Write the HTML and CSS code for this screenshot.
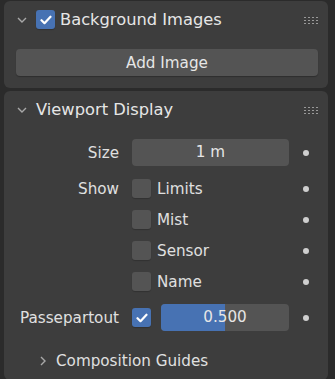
FILE: index.html
```html
<!DOCTYPE html>
<html lang="en">
<head>
  <meta charset="utf-8"/>
  <title>Camera Properties</title>
  <link rel="stylesheet" href="styles.css">
</head>
<body>
  <div class="editor">

    <!-- Background Images -->
    <section class="panel">
      <div class="panel-header">
        <svg class="chevron" viewBox="0 0 10 6" width="10" height="6">
          <path d="M1 1l4 4 4-4" fill="none" stroke="currentColor" stroke-width="1.4"/>
        </svg>
        <span class="check checked header-check">
          <svg viewBox="0 0 12 10" width="12" height="10"><path d="M1.5 5.2l3 3 6-6.5" fill="none" stroke="#fff" stroke-width="2.2" stroke-linecap="round" stroke-linejoin="round"/></svg>
        </span>
        <span class="panel-title">Background Images</span>
        <span class="grip"></span>
      </div>
      <div class="panel-body first-body">
        <button class="btn-wide">Add Image</button>
      </div>
    </section>

    <!-- Viewport Display -->
    <section class="panel panel-fill">
      <div class="panel-header">
        <svg class="chevron" viewBox="0 0 10 6" width="10" height="6">
          <path d="M1 1l4 4 4-4" fill="none" stroke="currentColor" stroke-width="1.4"/>
        </svg>
        <span class="panel-title">Viewport Display</span>
        <span class="grip"></span>
      </div>

      <div class="prop-row field-row">
        <span class="prop-label">Size</span>
        <div class="field">1 m</div>
        <span class="dot"></span>
      </div>

      <div class="prop-row check-row gap-top">
        <span class="prop-label">Show</span>
        <label class="check-item"><span class="check"></span>Limits</label>
        <span class="dot"></span>
      </div>
      <div class="prop-row check-row">
        <span class="prop-label"></span>
        <label class="check-item"><span class="check"></span>Mist</label>
        <span class="dot"></span>
      </div>
      <div class="prop-row check-row">
        <span class="prop-label"></span>
        <label class="check-item"><span class="check"></span>Sensor</label>
        <span class="dot"></span>
      </div>
      <div class="prop-row check-row">
        <span class="prop-label"></span>
        <label class="check-item"><span class="check"></span>Name</label>
        <span class="dot"></span>
      </div>

      <div class="prop-row field-row gap-top">
        <span class="prop-label">Passepartout</span>
        <div class="slider-group">
          <span class="check checked">
            <svg viewBox="0 0 12 10" width="12" height="10"><path d="M1.5 5.2l3 3 6-6.5" fill="none" stroke="#fff" stroke-width="2.2" stroke-linecap="round" stroke-linejoin="round"/></svg>
          </span>
          <div class="slider">
            <div class="slider-fill" style="width: 50%"></div>
            <span class="slider-value">0.500</span>
          </div>
        </div>
        <span class="dot"></span>
      </div>

      <div class="subpanel">
        <svg class="chevron-right" viewBox="0 0 6 10" width="6" height="10">
          <path d="M1 1l4 4-4 4" fill="none" stroke="currentColor" stroke-width="1.4"/>
        </svg>
        <span>Composition Guides</span>
      </div>
    </section>

  </div>
</body>
</html>
```

FILE: styles.css
```css
body {
  margin: 0;
  background-color: #2b2b2b;
  font-family: "DejaVu Sans", sans-serif;
  font-size: 15.2px;
  color: #e0e0e0;
  height: 379px;
  overflow: hidden;
}

.editor {
  padding: 1px 7px 0 4px;
  display: flex;
  flex-direction: column;
  gap: 3px;
}

.panel {
  background-color: #3d3d3d;
  border-radius: 6px;
}

.panel-fill {
  padding-bottom: 4px;
}

.panel-header {
  height: 37px;
  display: flex;
  align-items: center;
  padding-left: 13px;
  padding-right: 9px;
}

.chevron {
  color: #a8a8a8;
  margin-right: 9px;
}

.header-check {
  margin-right: 5px;
}

.panel-title {
  flex: 1;
  font-size: 16.3px;
  color: #e6e6e6;
}

.grip {
  width: 14px;
  height: 8px;
  background-image: radial-gradient(circle, #9a9a9a 0.9px, transparent 1.1px);
  background-size: 4px 3px;
  background-position: -1px 0;
  margin-right: 1px;
}

.first-body {
  padding: 11px 10px 12px 12px;
}

.btn-wide {
  width: 100%;
  height: 27px;
  background-color: #545454;
  border: none;
  border-radius: 4px;
  color: #e6e6e6;
  font-family: inherit;
  font-size: 15.2px;
  box-shadow: 0 1px 1px rgba(0, 0, 0, 0.25);
}

.prop-row {
  display: grid;
  grid-template-columns: 115px 157px 1fr;
  column-gap: 13px;
  align-items: center;
}

.field-row {
  height: 27px;
  margin-top: 11px;
}

.check-row {
  height: 31px;
}

.gap-top {
  margin-top: 7px;
}

.prop-label {
  text-align: right;
  color: #e0e0e0;
}

.field {
  height: 27px;
  line-height: 27px;
  background-color: #545454;
  border-radius: 4px;
  text-align: center;
  color: #e6e6e6;
}

.dot {
  width: 6px;
  height: 6px;
  border-radius: 50%;
  background-color: #cfcfcf;
  margin-left: 1px;
}

.check {
  width: 19px;
  height: 19px;
  border-radius: 3px;
  background-color: #545454;
  display: inline-flex;
  align-items: center;
  justify-content: center;
  flex-shrink: 0;
  box-shadow: 0 1px 1px rgba(0, 0, 0, 0.2);
}

.check.checked {
  background-color: #4772b3;
}

.check-item {
  display: flex;
  align-items: center;
  gap: 6px;
}

.slider-group {
  display: flex;
  align-items: center;
  gap: 10px;
}

.slider {
  position: relative;
  flex: 1;
  height: 27px;
  background-color: #545454;
  border-radius: 4px;
  overflow: hidden;
}

.slider-fill {
  height: 100%;
  background-color: #4772b3;
}

.slider-value {
  position: absolute;
  inset: 0;
  line-height: 27px;
  text-align: center;
  color: #e6e6e6;
}

.subpanel {
  display: flex;
  align-items: center;
  height: 30px;
  margin-top: 15px;
  padding-left: 36px;
  gap: 10px;
}

.chevron-right {
  color: #a8a8a8;
}
```
